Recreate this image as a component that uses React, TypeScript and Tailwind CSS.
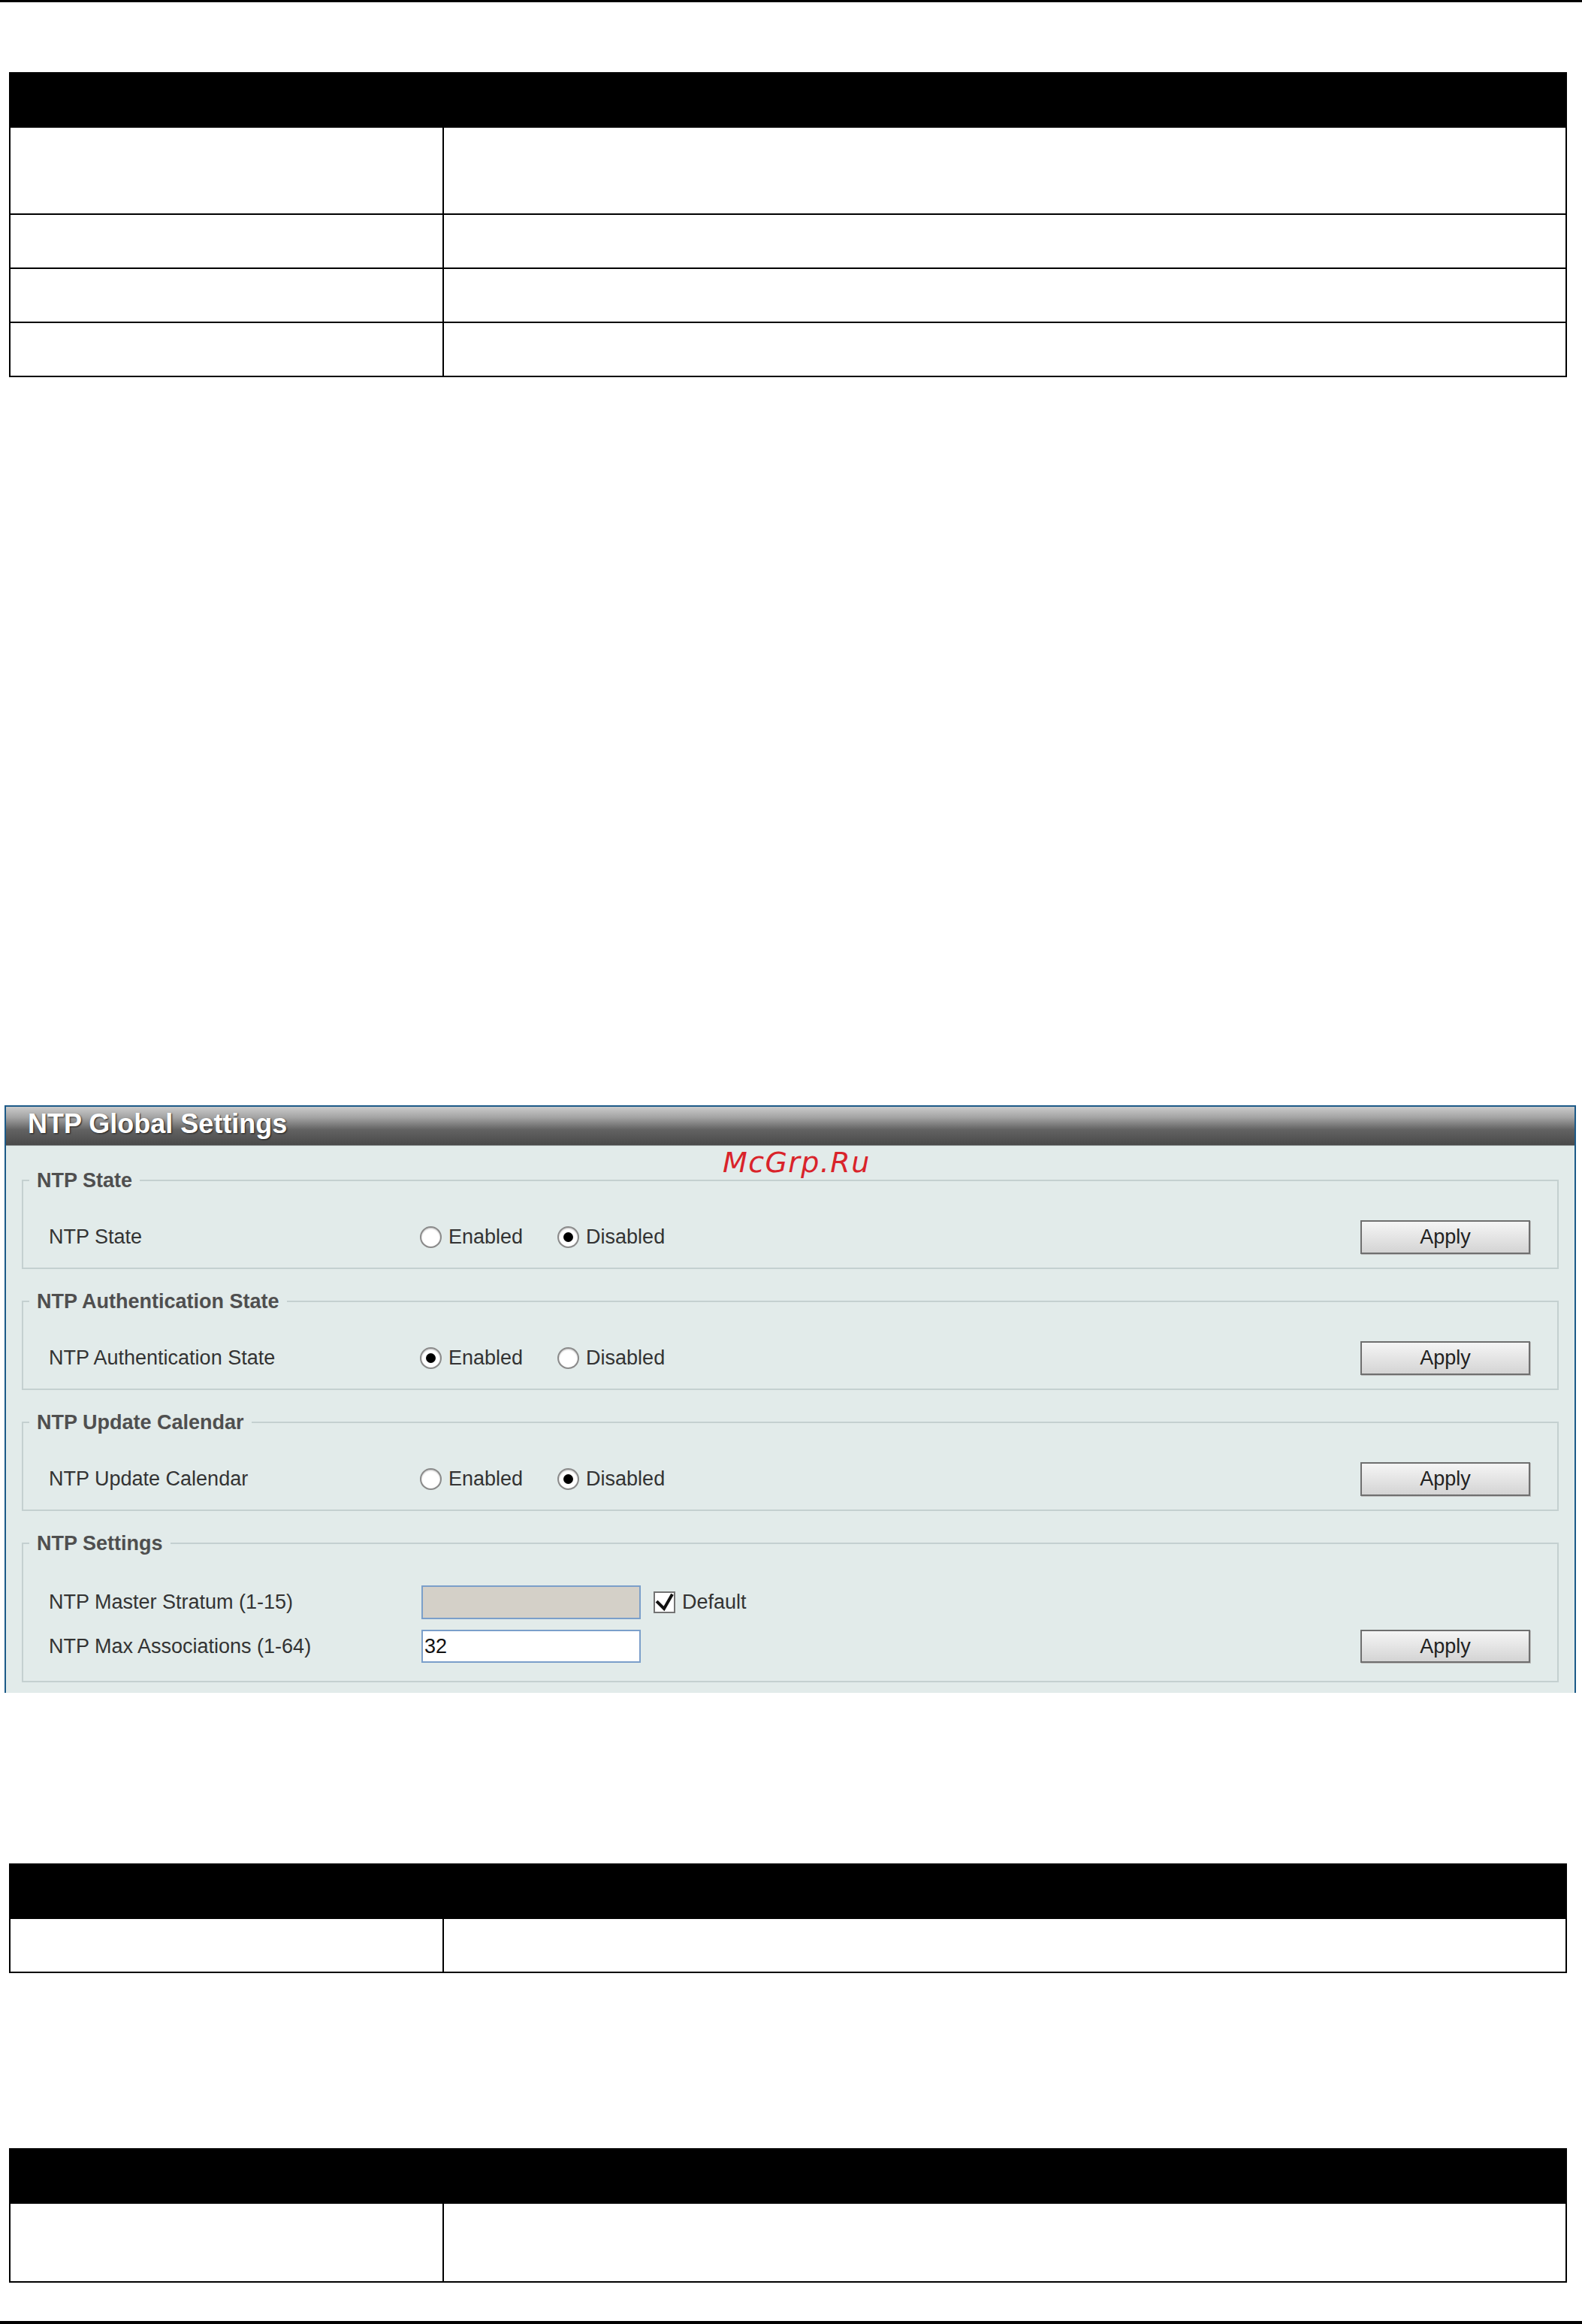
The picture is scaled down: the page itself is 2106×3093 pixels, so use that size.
import React from 'react';

const SANS = "font-['Liberation_Sans',Arial,sans-serif]";

// black-headed doc tables, the header row carries no text in this shot
const DocTable = ({ rows }: { rows: number[] }) => (
  <div className="ml-[12px] w-[2074px] border-x-2 border-black">
    <div className="h-[74px] bg-black" />
    {rows.map((h, i) => (
      <div key={i} className="flex border-b-2 border-black" style={{ height: h }}>
        <div className="h-full w-[577px] border-r-2 border-black" />
        <div className="h-full flex-1" />
      </div>
    ))}
  </div>
);

const Radio = ({ checked, label, className = '' }: { checked?: boolean; label: string; className?: string }) => (
  <label className={`flex items-center gap-[9px] ${className}`}>
    <span className="flex h-[29px] w-[29px] items-center justify-center rounded-full border-2 border-[#8a8a8a] bg-white shadow-[inset_0_1px_2px_rgba(0,0,0,0.25)]">
      {checked && <span className="h-[13px] w-[13px] rounded-full bg-black" />}
    </span>
    <span className="text-[27px] leading-none text-[#333]">{label}</span>
  </label>
);

const ApplyButton = ({ tall = 45 }: { tall?: number }) => (
  <button
    type="button"
    className="ml-auto flex w-[226px] items-center justify-center border-2 border-[#6f6f6f] bg-[linear-gradient(to_bottom,#f5f5f5,#d4d4d4)] text-[27px] leading-none text-[#222] shadow-[1px_1px_0_#bdbdbd]"
    style={{ height: tall }}
  >
    Apply
  </button>
);

const Box = ({ legend, children, pt = 38, pb = 18 }: { legend: string; children: React.ReactNode; pt?: number; pb?: number }) => (
  <fieldset className="border-2 border-[#c4d0d0] px-[8px]" style={{ paddingTop: pt, paddingBottom: pb }}>
    <legend className="px-[10px] text-[27px] font-bold leading-[30px] text-[#4f4f4f]">{legend}</legend>
    {children}
  </fieldset>
);

const StateRow = ({ label, enabled }: { label: string; enabled: boolean }) => (
  <div className="flex h-[45px] items-center pl-[26px] pr-[28px]">
    <div className="w-[494px] text-[27px] leading-none text-[#333]">{label}</div>
    <Radio checked={enabled} label="Enabled" />
    <Radio checked={!enabled} label="Disabled" className="ml-[46px]" />
    <ApplyButton />
  </div>
);

export default function App() {
  return (
    <div className={`w-[2106px] bg-white ${SANS}`}>
      <div className="h-[3px] bg-black" />

      <div className="mt-[93px]">
        <DocTable rows={[116, 72, 72, 72]} />
      </div>

      <div className="relative ml-[6px] mt-[969px] w-[2092px] border-x-2 border-t-2 border-[#1c5a88] bg-[#e2ebea]">
        <div className="flex h-[52px] items-center border-b border-[#8e9494] bg-[linear-gradient(to_bottom,#cbcbcb_0%,#a3a3a3_28%,#626262_60%,#4a4a4a_100%)] pb-[5px] pl-[29px]">
          <span className="text-[36px] font-bold leading-none text-white [text-shadow:1px_1px_2px_#1a1a1a]">
            NTP Global Settings
          </span>
        </div>

        <span className="absolute left-[954px] top-[55px] font-['DejaVu_Sans',sans-serif] text-[38px] italic leading-none tracking-[1.4px] text-[#d9232a]">
          McGrp.Ru
        </span>

        <div className="flex flex-col gap-[28px] px-[21px] pb-[14px] pt-[31px]">
          <Box legend="NTP State">
            <StateRow label="NTP State" enabled={false} />
          </Box>
          <Box legend="NTP Authentication State">
            <StateRow label="NTP Authentication State" enabled />
          </Box>
          <Box legend="NTP Update Calendar">
            <StateRow label="NTP Update Calendar" enabled={false} />
          </Box>
          <Box legend="NTP Settings" pt={41} pb={24}>
            <div className="flex h-[45px] items-center pl-[26px] pr-[28px]">
              <div className="w-[496px] text-[27px] leading-none text-[#333]">NTP Master Stratum (1-15)</div>
              <input
                type="text"
                disabled
                className="h-[45px] w-[292px] border-2 border-[#7b9fca] bg-[#d4d0c8] px-[2px] text-[27px] outline-none"
              />
              <span className="ml-[17px] flex h-[29px] w-[29px] items-center justify-center border-2 border-[#737373] bg-white">
                <svg width="25" height="25" viewBox="0 0 25 25" fill="none" stroke="#111" strokeWidth="4" strokeLinecap="square">
                  <path d="M3.5 12.5 L12 21 L22 3.5" />
                </svg>
              </span>
              <span className="ml-[9px] text-[27px] leading-none text-[#333]">Default</span>
            </div>
            <div className="mt-[14px] flex h-[44px] items-center pl-[26px] pr-[28px]">
              <div className="w-[496px] text-[27px] leading-none text-[#333]">NTP Max Associations (1-64)</div>
              <input
                type="text"
                readOnly
                defaultValue="32"
                className="h-[44px] w-[292px] border-2 border-[#7b9fca] bg-white px-[2px] text-[27px] text-[#111] outline-none"
              />
              <ApplyButton tall={44} />
            </div>
          </Box>
        </div>
      </div>

      <div className="mt-[227px]">
        <DocTable rows={[72]} />
      </div>

      <div className="mt-[233px]">
        <DocTable rows={[105]} />
      </div>

      <div className="mt-[51px] h-[4px] bg-black" />
    </div>
  );
}
